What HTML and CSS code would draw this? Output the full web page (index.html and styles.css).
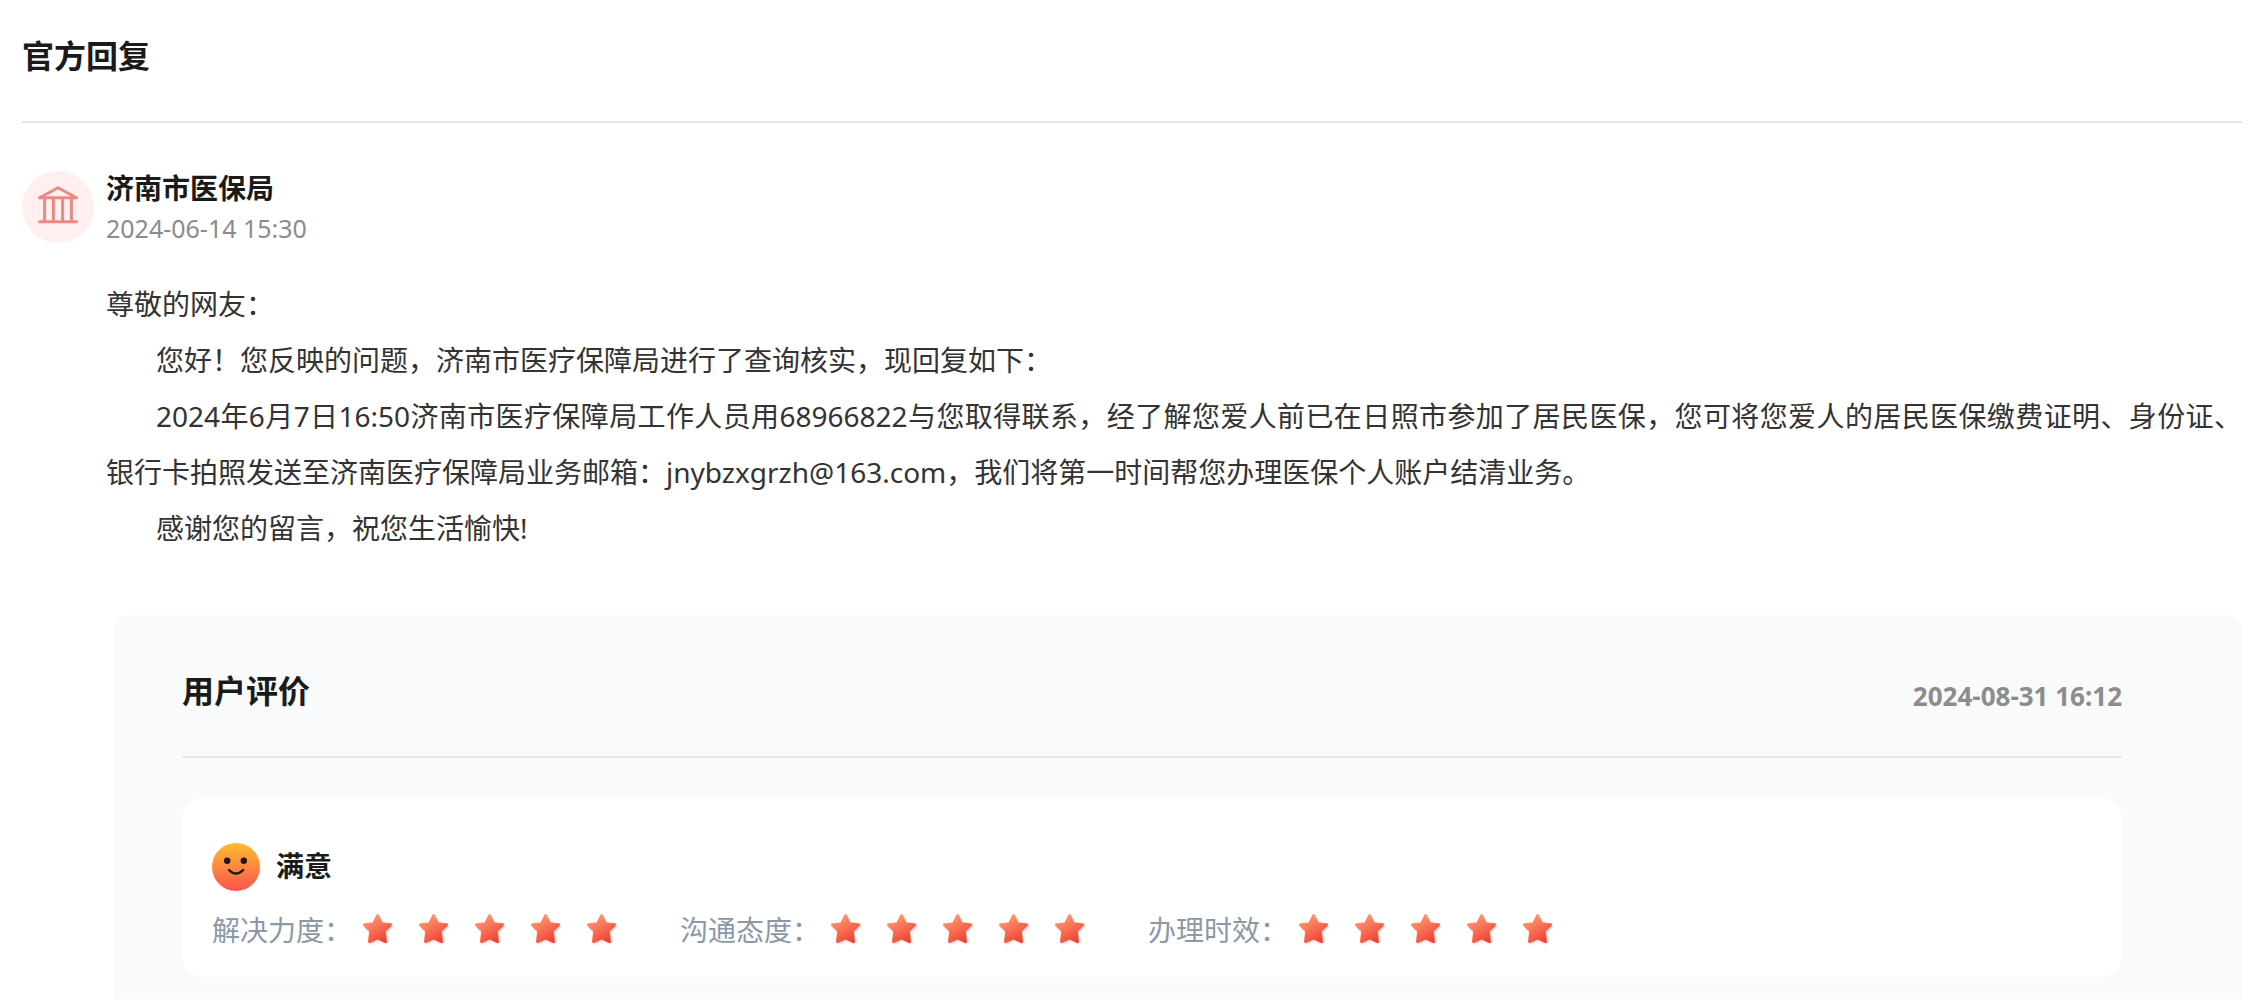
FILE: index.html
```html
<!DOCTYPE html>
<html lang="zh-CN">
<head>
    <meta charset="UTF-8">
    <meta name="viewport" content="width=device-width, initial-scale=1.0">
    <title>官方回复</title>
    <link rel="stylesheet" href="styles.css">
</head>
<body>
    <!-- shared star shape -->
    <svg class="defs" width="0" height="0" aria-hidden="true">
        <defs>
            <linearGradient id="starFill" x1="0.2" y1="0" x2="0.8" y2="1">
                <stop offset="0" stop-color="#ffa377"/>
                <stop offset="1" stop-color="#ee3a2d"/>
            </linearGradient>
            <symbol id="star" viewBox="0 0 32 32">
                <path d="M14.2 2.2Q15.5 -0.2 16.8 2.2L20.4 9.4L28.6 10.3Q31 10.9 29.4 13L23.8 18.6L24.9 28.4Q25 30.8 22.6 29.8L15.5 26.4L8.4 29.8Q6 30.8 6.1 28.4L7.2 18.6L1.6 13Q0 10.9 2.4 10.3L10.6 9.4Z" fill="url(#starFill)"/>
            </symbol>
        </defs>
    </svg>

    <h2 class="title">官方回复</h2>

    <div class="reply-head">
        <svg class="avatar" viewBox="0 0 72 72" aria-hidden="true">
            <circle cx="36" cy="36" r="36" fill="#ffefee"/>
            <g fill="none" stroke="#e98a85" stroke-width="3" stroke-linecap="round" stroke-linejoin="round">
                <path d="M36 16.8L54.5 26.8H17.5Z"/>
                <path d="M17.5 50.8H54.5"/>
                <path d="M22.6 27V50M31.4 27V50M40.6 27V50M49.4 27V50"/>
            </g>
        </svg>
        <div>
            <h3 class="name">济南市医保局</h3>
            <div class="time">2024-06-14 15:30</div>
        </div>
    </div>

    <div class="content">
        <p>尊敬的网友：</p>
        <p class="indent">您好！您反映的问题，济南市医疗保障局进行了查询核实，现回复如下：</p>
        <p class="indent">2024年6月7日16:50济南市医疗保障局工作人员用68966822与您取得联系，经了解您爱人前已在日照市参加了居民医保，您可将您爱人的居民医保缴费证明、身份证、银行卡拍照发送至济南医疗保障局业务邮箱：jnybzxgrzh@163.com，我们将第一时间帮您办理医保个人账户结清业务。</p>
        <p class="indent">感谢您的留言，祝您生活愉快!</p>
    </div>

    <div class="review">
        <div class="review-head">
            <h2 class="review-title">用户评价</h2>
            <span class="review-time">2024-08-31 16:12</span>
        </div>
        <div class="card">
            <div class="mood">
                <svg class="face" viewBox="0 0 48 48" aria-hidden="true">
                    <defs>
                        <linearGradient id="faceFill" x1="0" y1="0" x2="0" y2="1">
                            <stop offset="0" stop-color="#fbbc2c"/>
                            <stop offset="1" stop-color="#ff5350"/>
                        </linearGradient>
                    </defs>
                    <circle cx="24" cy="24" r="24" fill="url(#faceFill)"/>
                    <circle cx="15.2" cy="17.8" r="3.2" fill="#1a1a1a"/>
                    <circle cx="31.8" cy="17.8" r="3.2" fill="#1a1a1a"/>
                    <path d="M17 27Q24 34 31.2 27" fill="none" stroke="#1a1a1a" stroke-width="2.4" stroke-linecap="round"/>
                </svg>
                <span>满意</span>
            </div>
            <div class="rates">
                <div class="rate">
                    <span class="rate-label">解决力度：</span>
                    <div class="stars" role="img" aria-label="5">
                        <svg><use href="#star"/></svg>
                        <svg><use href="#star"/></svg>
                        <svg><use href="#star"/></svg>
                        <svg><use href="#star"/></svg>
                        <svg><use href="#star"/></svg>
                    </div>
                </div>
                <div class="rate">
                    <span class="rate-label">沟通态度：</span>
                    <div class="stars" role="img" aria-label="5">
                        <svg><use href="#star"/></svg>
                        <svg><use href="#star"/></svg>
                        <svg><use href="#star"/></svg>
                        <svg><use href="#star"/></svg>
                        <svg><use href="#star"/></svg>
                    </div>
                </div>
                <div class="rate">
                    <span class="rate-label">办理时效：</span>
                    <div class="stars" role="img" aria-label="5">
                        <svg><use href="#star"/></svg>
                        <svg><use href="#star"/></svg>
                        <svg><use href="#star"/></svg>
                        <svg><use href="#star"/></svg>
                        <svg><use href="#star"/></svg>
                    </div>
                </div>
            </div>
        </div>
    </div>
</body>
</html>
```

FILE: styles.css
```css
* {
    box-sizing: border-box;
}
body {
    display: flex;
    flex-direction: column;
    min-height: 100vh;
    margin: 0;
    padding: 0 15px 0 22px;
    background: #fff;
    color: #333;
    font-family: "Noto Sans", "Noto Sans CJK SC", sans-serif;
    font-size: 28px;
}
h2,
h3,
p {
    margin: 0;
}
.defs {
    position: absolute;
}
.title {
    padding: 32px 0 41px;
    border-bottom: 2px solid #e5e5e5;
    color: #1a1a1a;
    font-size: 32px;
    line-height: 48px;
}
.reply-head {
    display: flex;
    gap: 12px;
    padding-top: 48px;
}
.avatar {
    width: 72px;
    height: 72px;
}
.name {
    color: #1a1a1a;
    font-size: 28px;
    line-height: 34px;
}
.time {
    color: #8c8c8c;
    font-size: 25px;
    line-height: 46px;
}
.content {
    margin: 25px 0 59px;
    padding-left: 84px;
    line-height: 56px;
    text-align: justify;
}
.indent {
    text-indent: 50px;
}
.review {
    flex: 1;
    margin-left: 92px;
    padding: 0 120px 22px 68px;
    border-radius: 16px 16px 0 0;
    background: #f9fafc;
}
.review-head {
    display: flex;
    align-items: center;
    justify-content: space-between;
    padding: 52px 0 41px;
    border-bottom: 2px solid #e5e7e9;
}
.review-title {
    color: #1a1a1a;
    font-size: 32px;
    line-height: 48px;
}
.review-time {
    padding-top: 10px;
    color: #8c8c8c;
    font-size: 26px;
    font-weight: bold;
    line-height: 38px;
}
.card {
    margin-top: 40px;
    padding: 45px 30px 27px;
    border-radius: 20px;
    background: #fff;
}
.mood {
    display: flex;
    gap: 16px;
    color: #1a1a1a;
    font-weight: bold;
    line-height: 46px;
}
.face {
    width: 48px;
    height: 48px;
}
.rates {
    display: flex;
    flex-wrap: wrap;
    gap: 0 62px;
    margin-top: 19px;
}
.rate {
    display: flex;
    align-items: center;
    gap: 10px;
}
.rate-label {
    color: #8c98a8;
    line-height: 40px;
}
.stars {
    display: flex;
    gap: 24px;
    padding-bottom: 2px;
}
.stars svg {
    width: 32px;
    height: 32px;
    filter: drop-shadow(1px 1px 1px rgba(238, 58, 45, 0.3));
}
```
